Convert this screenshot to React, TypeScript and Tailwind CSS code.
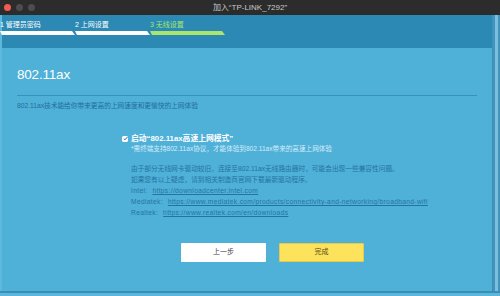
import React, { useState } from 'react';

const font = "font-['Liberation_Sans','Noto_Sans_CJK_SC',sans-serif]";

const steps = [
  { label: '1 管理员密码', color: '#ffffff' },
  { label: '2 上网设置', color: '#ffffff' },
  { label: '3 无线设置', color: '#a9e66b' },
];

const links = [
  { name: 'Intel:', url: 'https://downloadcenter.intel.com' },
  { name: 'Mediatek:', url: 'https://www.mediatek.com/products/connectivity-and-networking/broadband-wifi' },
  { name: 'Realtek:', url: 'https://www.realtek.com/en/downloads' },
];

const StepBar: React.FC<{ color: string }> = ({ color }) => (
  <svg width="75" height="4" viewBox="0 0 75 4" className="block">
    <polygon points="0,0 72,0 75,4 2,4" fill={color} />
  </svg>
);

const App: React.FC = () => {
  const [enabled, setEnabled] = useState(true);

  return (
    <div className={`w-[500px] h-[296px] overflow-hidden flex flex-col bg-[#4fb0d8] ${font}`}>
      {/* window title bar */}
      <div className="h-[15px] bg-[#2c2c2c] grid grid-cols-[1fr_auto_1fr] items-center">
        <div className="flex items-center gap-[5px] pl-[4px]">
          <span className="w-[7px] h-[7px] rounded-full bg-[#f05b52]" />
          <span className="w-[7px] h-[7px] rounded-full bg-[#4d4d4d]" />
          <span className="w-[7px] h-[7px] rounded-full bg-[#4d4d4d]" />
        </div>
        <div className="text-[8px] leading-[15px] text-[#c9c9c9]">加入“TP-LINK_7292”</div>
        <div />
      </div>

      <div className="flex-1 flex min-h-0">
        <div className="flex-1 flex flex-col border-l-[2px] border-[#5db8dd]">
          {/* steps */}
          <div className="h-[33px] bg-[#2b89b4] flex">
            {steps.map((s) => (
              <div key={s.label} className="w-[75px] flex flex-col">
                <div
                  className="text-[7px] leading-[9px] mt-[5px] -ml-[2px] h-[9px]"
                  style={{ color: s.color }}
                >
                  {s.label}
                </div>
                <div className="mt-[2px] -ml-[2px]">
                  <StepBar color={s.color} />
                </div>
              </div>
            ))}
          </div>

          {/* content */}
          <div className="flex-1 flex flex-col px-[15px]">
            <h1 className="mt-[19px] text-[13.5px] leading-[16px] text-white tracking-[-0.2px]">802.11ax</h1>
            <div className="mt-[12px] h-px bg-[#3a91ba]" />
            <p className="mt-[4px] text-[6.7px] leading-[11px] text-[#1f6f98]">
              802.11ax技术能给你带来更高的上网速度和更愉快的上网体验
            </p>

            <div className="pl-[105px] mt-[22px]">
              <label className="flex items-center h-[11px] cursor-pointer">
                <input
                  type="checkbox"
                  checked={enabled}
                  onChange={(e) => setEnabled(e.target.checked)}
                  className="sr-only"
                />
                <span className="w-[6px] h-[6px] rounded-[1.5px] bg-white flex items-center justify-center">
                  {enabled && (
                    <svg width="5" height="5" viewBox="0 0 10 10">
                      <path d="M1.5 5.2 L4 7.6 L8.6 2.2" stroke="#1f6fd0" strokeWidth="2" fill="none" />
                    </svg>
                  )}
                </span>
                <span className="ml-[3px] text-[7.8px] font-bold text-white">启动“802.11ax高速上网模式”</span>
              </label>
              <div className="pl-[9px]">
                <p className="text-[6.6px] leading-[9px] text-[#d5edf8]">
                  *需终端支持802.11ax协议，才能体验到802.11ax带来的高速上网体验
                </p>
                <div className="mt-[10px] text-[6.7px] leading-[11px] text-[#2474a0]">
                  <p>由于部分无线网卡驱动较旧，连接至802.11ax无线路由器时，可能会出现一些兼容性问题。</p>
                  <p>如果您有以上疑虑，请到相关制造商官网下载最新驱动程序。</p>
                  {links.map((l) => (
                    <p key={l.name} className="tracking-[0.32px]">
                      {l.name}
                      <a href="#" className="ml-[5px] underline">
                        {l.url}
                      </a>
                    </p>
                  ))}
                </div>
              </div>
            </div>

            <div className="mt-[25px] pl-[164px] flex gap-[13px]">
              <button className="w-[85px] h-[19px] bg-white rounded-[1px] text-[7px] text-[#444]">上一步</button>
              <button className="w-[85px] h-[19px] bg-[#fde25c] border border-[#e9c94a] rounded-[1px] text-[7px] text-[#5a4a10]">
                完成
              </button>
            </div>
          </div>
        </div>

        {/* scrollbar */}
        <div className="w-[8px] flex border-l border-[#3d8fb7] bg-[#3f95bf]">
          <div className="ml-[2px] w-[3px] bg-[#7dbfdb]" />
        </div>
      </div>

      {/* bottom edge */}
      <div className="h-[2px] bg-[#3a8db5]" />
      <div className="h-[3px] bg-[#5bb6dc]" />
    </div>
  );
};

export default App;
